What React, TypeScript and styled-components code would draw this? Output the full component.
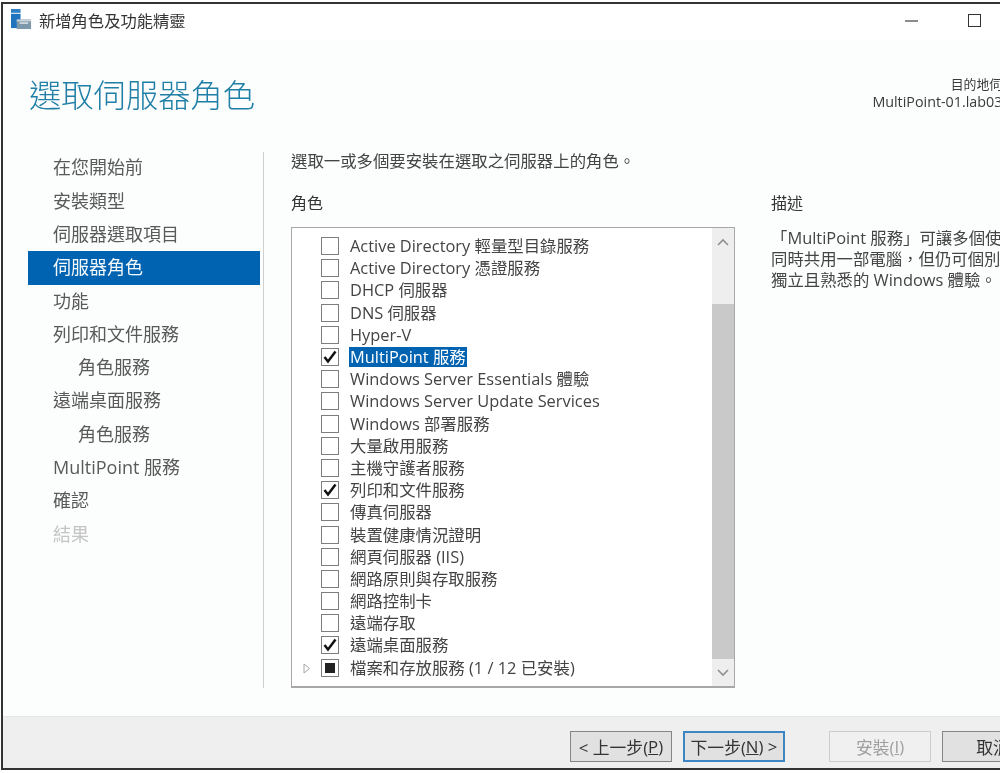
import React from 'react';
import styled, {createGlobalStyle} from 'styled-components';

const GlobalStyle = createGlobalStyle`
  html, body {
    margin: 0;
    padding: 0;
    width: 1000px;
    height: 773px;
    overflow: hidden;
    background: #ffffff;
    font-family: "Open Sans", "Noto Sans CJK TC", sans-serif;
  }
`;

const Window = styled.div`
  box-sizing: border-box;
  width: 1060px;
  height: 768px;
  margin: 2px 0 0 1px;
  border: 2px solid #333333;
  border-right: none;
  display: flex;
  flex-direction: column;
  background: #fcfdfd;
  color: #444444;
  filter: blur(0.5px);
`;

const TitleBar = styled.div`
  height: 36px;
  flex: none;
  display: flex;
  align-items: center;
  background: #ffffff;
  padding: 0 0 5px 8px;
  box-sizing: border-box;
`;

const TitleText = styled.span`
  margin-left: 7px;
  font-size: 16.3px;
  color: #333333;
`;

const WinControls = styled.div`
  margin: 2px 80px 0 auto;
  display: flex;
  align-items: center;
  gap: 50px;
`;

const MinButton = styled.div`
  width: 13px;
  height: 2px;
  background: #8c8c8c;
`;

const MaxButton = styled.div`
  box-sizing: border-box;
  width: 13px;
  height: 13px;
  border: 1px solid #333333;
`;

const Header = styled.div`
  height: 112px;
  flex: none;
  box-sizing: border-box;
  display: flex;
  justify-content: space-between;
  padding: 31px 33px 0 26px;
`;

const PageTitle = styled.h1`
  margin: 0;
  font-size: 32.3px;
  font-weight: 300;
  line-height: 46px;
  color: #1f7fa6;
`;

const Target = styled.div`
  padding-top: 5px;
  text-align: right;
  font-size: 14.3px;
  line-height: 17px;
  color: #3a3a3a;
`;

const TargetLabel = styled.div`
  font-size: 12.9px;
`;

const Content = styled.div`
  flex: 1;
  display: flex;
  min-height: 0;
`;

const Nav = styled.nav`
  width: 232px;
  margin: -0.7px 0 0 25px;
  flex: none;
`;

const NavItem = styled.div<{$active?: boolean; $sub?: boolean; $disabled?: boolean}>`
  height: 33.3px;
  line-height: 33.3px;
  box-sizing: border-box;
  padding-left: ${p => (p.$sub ? '50px' : '25px')};
  font-size: 18px;
  white-space: nowrap;
  background: ${p => (p.$active ? '#0063b1' : 'transparent')};
  color: ${p => (p.$active ? '#f4f8fb' : p.$disabled ? '#c4c4c4' : '#5a5a5a')};
`;

const Divider = styled.div`
  width: 1px;
  height: 536px;
  margin-left: 3px;
  background: #cfcfcf;
  flex: none;
`;

const Main = styled.div`
  width: 444px;
  margin-left: 27px;
  flex: none;
`;

const Intro = styled.div`
  height: 18px;
  line-height: 18px;
  font-size: 16.4px;
  white-space: nowrap;
`;

const SectionLabel = styled.div`
  margin-top: 24px;
  height: 18px;
  line-height: 18px;
  font-size: 16px;
  color: #333333;
  white-space: nowrap;
`;

const ListBox = styled.div`
  box-sizing: border-box;
  margin-top: 15px;
  height: 461px;
  border: 1px solid #a8a8a8;
  border-width: 1px 1px 2px 1px;
  background: #ffffff;
  display: flex;
`;

const Rows = styled.div`
  flex: 1;
  padding-top: 7px;
  min-width: 0;
`;

const Row = styled.div`
  height: 22.2px;
  display: flex;
  align-items: center;
  padding-left: 29px;
  position: relative;
`;

const Expander = styled.svg`
  position: absolute;
  left: 11px;
  top: 6px;
`;

const CheckBox = styled.div`
  box-sizing: border-box;
  width: 18px;
  height: 18px;
  flex: none;
  border: 1.5px solid #7d7d7d;
  background: #ffffff;
  display: flex;
  align-items: center;
  justify-content: center;
`;

const PartialMark = styled.div`
  width: 10px;
  height: 10px;
  background: #222222;
`;

const RowLabel = styled.span<{$selected?: boolean}>`
  margin-left: 10px;
  padding: 0 1px;
  height: 20px;
  line-height: 20px;
  font-size: 16.4px;
  white-space: nowrap;
  background: ${p => (p.$selected ? '#0063b1' : 'transparent')};
  color: ${p => (p.$selected ? '#ffffff' : '#444444')};
`;

const ScrollBar = styled.div`
  width: 22px;
  flex: none;
  display: flex;
  flex-direction: column;
  background: #eeeeee;
`;

const ScrollArrow = styled.div`
  height: 27px;
  flex: none;
  display: flex;
  align-items: center;
  justify-content: center;
`;

const ScrollTrack = styled.div`
  flex: 1;
  padding: 49px 0 0;
  min-height: 0;
  display: flex;
`;

const ScrollThumb = styled.div`
  flex: 1;
  background: #c9c9c9;
`;

const Description = styled.div`
  margin-left: 36px;
  padding-top: 18px;
  flex: none;
  width: 280px;
`;

const DescText = styled.div`
  margin-top: 15px;
  font-size: 16.4px;
  line-height: 21px;
  white-space: nowrap;
`;

const Footer = styled.div`
  height: 52px;
  flex: none;
  box-sizing: border-box;
  background: #efefef;
  border-top: 1px solid #e5e5e5;
  display: flex;
  align-items: flex-start;
  justify-content: flex-end;
  padding: 14px 17px 0 0;
`;

const Button = styled.div<{$primary?: boolean; $disabled?: boolean; $gap?: number}>`
  box-sizing: border-box;
  width: 102px;
  height: 31px;
  margin-left: ${p => p.$gap ?? 11}px;
  display: flex;
  align-items: center;
  justify-content: center;
  white-space: pre;
  font-size: 16.8px;
  background: ${p => (p.$disabled ? '#f0f0f0' : '#e1e1e1')};
  border: ${p => (p.$primary ? '2px solid #3c86c4' : p.$disabled ? '1px solid #cccccc' : '1px solid #858585')};
  color: ${p => (p.$disabled ? '#a0a0a0' : '#333333')};
`;

const Glyph = styled.svg`
  flex: none;
`;

const ServerIcon = () => (
  <Glyph width="21" height="21" viewBox="0 0 22 22">
    <rect x="0" y="0" width="10" height="4" fill="#2f7fc4" />
    <rect x="0" y="5" width="10" height="15" fill="#1f74bd" />
    <rect x="6" y="11" width="15" height="10" fill="#7d97ab" />
    <rect x="6" y="11" width="15" height="2" fill="#c9d3db" />
    <rect x="9" y="14" width="9" height="1.5" fill="#e4e9ed" />
  </Glyph>
);

const CheckMark = () => (
  <Glyph width="14" height="14" viewBox="0 0 14 14">
    <path d="M1.5 7 L5 11.5 L12.5 1.5" fill="none" stroke="#111111" strokeWidth="2.5" />
  </Glyph>
);

const navItems = [
  {label: '在您開始前'},
  {label: '安裝類型'},
  {label: '伺服器選取項目'},
  {label: '伺服器角色', active: true},
  {label: '功能'},
  {label: '列印和文件服務'},
  {label: '角色服務', sub: true},
  {label: '遠端桌面服務'},
  {label: '角色服務', sub: true},
  {label: 'MultiPoint 服務'},
  {label: '確認'},
  {label: '結果', disabled: true},
];

const roles = [
  {label: 'Active Directory 輕量型目錄服務'},
  {label: 'Active Directory 憑證服務'},
  {label: 'DHCP 伺服器'},
  {label: 'DNS 伺服器'},
  {label: 'Hyper-V'},
  {label: 'MultiPoint 服務', checked: true, selected: true},
  {label: 'Windows Server Essentials 體驗'},
  {label: 'Windows Server Update Services'},
  {label: 'Windows 部署服務'},
  {label: '大量啟用服務'},
  {label: '主機守護者服務'},
  {label: '列印和文件服務', checked: true},
  {label: '傳真伺服器'},
  {label: '裝置健康情況證明'},
  {label: '網頁伺服器 (IIS)'},
  {label: '網路原則與存取服務'},
  {label: '網路控制卡'},
  {label: '遠端存取'},
  {label: '遠端桌面服務', checked: true},
  {label: '檔案和存放服務 (1 / 12 已安裝)', partial: true},
];

const App = () => {
  return (
    <>
      <GlobalStyle />
      <Window lang="zh-Hant">
        <TitleBar>
          <ServerIcon />
          <TitleText>新增角色及功能精靈</TitleText>
          <WinControls>
            <MinButton />
            <MaxButton />
          </WinControls>
        </TitleBar>
        <Header>
          <PageTitle>選取伺服器角色</PageTitle>
          <Target>
            <TargetLabel>目的地伺服器</TargetLabel>
            <div>MultiPoint-01.lab03.net</div>
          </Target>
        </Header>
        <Content>
          <Nav>
            {navItems.map((item, i) => (
              <NavItem key={i} $active={item.active} $sub={item.sub} $disabled={item.disabled}>
                {item.label}
              </NavItem>
            ))}
          </Nav>
          <Divider />
          <Main>
            <Intro>選取一或多個要安裝在選取之伺服器上的角色。</Intro>
            <SectionLabel>角色</SectionLabel>
            <ListBox>
              <Rows>
                {roles.map((role, i) => (
                  <Row key={i}>
                    {role.partial && (
                      <Expander width="8" height="11" viewBox="0 0 8 11">
                        <path d="M1 1 L6.5 5.5 L1 10 Z" fill="#ffffff" stroke="#a6a6a6" />
                      </Expander>
                    )}
                    <CheckBox>
                      {role.checked && <CheckMark />}
                      {role.partial && <PartialMark />}
                    </CheckBox>
                    <RowLabel $selected={role.selected}>{role.label}</RowLabel>
                  </Row>
                ))}
              </Rows>
              <ScrollBar>
                <ScrollArrow>
                  <Glyph width="12" height="8" viewBox="0 0 12 8">
                    <path d="M1 7 L6 2 L11 7" fill="none" stroke="#8f8f8f" strokeWidth="1.6" />
                  </Glyph>
                </ScrollArrow>
                <ScrollTrack>
                  <ScrollThumb />
                </ScrollTrack>
                <ScrollArrow>
                  <Glyph width="12" height="8" viewBox="0 0 12 8">
                    <path d="M1 1 L6 6 L11 1" fill="none" stroke="#8f8f8f" strokeWidth="1.6" />
                  </Glyph>
                </ScrollArrow>
              </ScrollBar>
            </ListBox>
          </Main>
          <Description>
            <SectionLabel>描述</SectionLabel>
            <DescText>
              「MultiPoint 服務」可讓多個使用者
              <br />
              同時共用一部電腦，但仍可個別享有
              <br />
              獨立且熟悉的 Windows 體驗。
            </DescText>
          </Description>
        </Content>
        <Footer>
          <Button>{'< '}上一步(<u>P</u>)</Button>
          <Button $primary>下一步(<u>N</u>){' >'}</Button>
          <Button $disabled $gap={44}>安裝(<u>I</u>)</Button>
          <Button>取消</Button>
        </Footer>
      </Window>
    </>
  );
};

export default App;
